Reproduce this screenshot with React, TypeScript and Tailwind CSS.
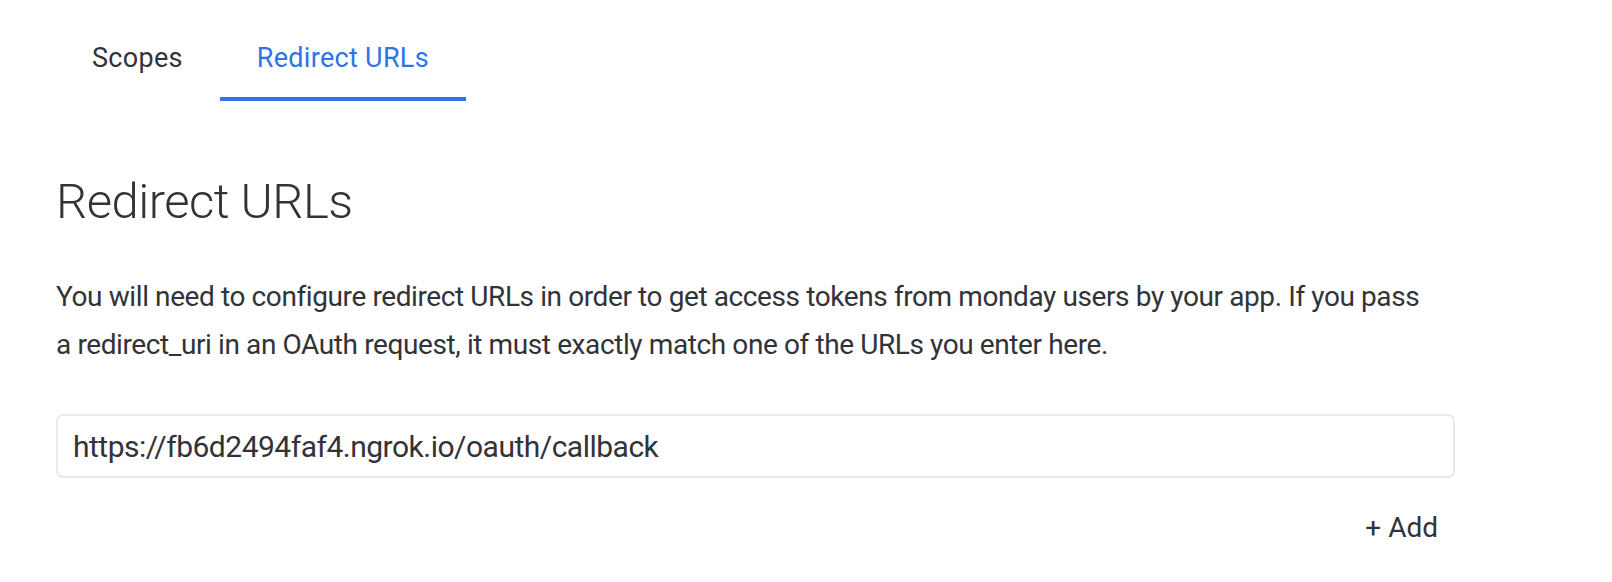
import { useState } from "react";

const tabs = ["Scopes", "Redirect URLs"];

export default function App() {
    const [active, setActive] = useState("Redirect URLs");
    const [urls, setUrls] = useState(["https://fb6d2494faf4.ngrok.io/oauth/callback"]);

    return (
        <main className="min-h-screen bg-white text-[#323338] font-['Roboto',sans-serif]">
            <div className="flex pl-[55px] pt-[20px]">
                {tabs.map((tab) => {
                    const isActive = tab === active;
                    return (
                        <button
                            key={tab}
                            onClick={() => setActive(tab)}
                            className={`h-[81px] px-[37px] text-[27px] leading-none tracking-[0.3px] border-b-[4px] ${isActive ? "border-[#2d74e6] text-[#2d74e6]" : "border-transparent text-[#323338]"
                                }`}
                        >
                            {tab}
                        </button>
                    );
                })}
            </div>

            <section className="pl-[56px] pt-[71px]">
                <h1 className="text-[49px] font-light leading-[60px] tracking-[-0.5px]">Redirect URLs</h1>

                <p className="mt-[41px] max-w-[1365px] text-[28px] leading-[48px] tracking-[-0.4px]">
                    You will need to configure redirect URLs in order to get access tokens from monday users by your app. If you pass
                    a redirect_uri in an OAuth request, it must exactly match one of the URLs you enter here.
                </p>

                <div className="mt-[45px] w-[1399px] space-y-3">
                    {urls.map((url, i) => (
                        <input
                            key={i}
                            value={url}
                            onChange={(e) => setUrls(urls.map((u, j) => (j === i ? e.target.value : u)))}
                            className="block h-[64px] w-full rounded-[7px] border-2 border-[#e6e9ef] px-[15px] text-[30px] tracking-[-0.5px] text-[#323338] outline-none"
                        />
                    ))}
                </div>

                <div className="flex w-[1399px] justify-end pt-[36px] pr-[17px]">
                    <button onClick={() => setUrls([...urls, ""])} className="text-[28px] leading-none text-[#323338]">
                        + Add
                    </button>
                </div>
            </section>
        </main>
    );
}
